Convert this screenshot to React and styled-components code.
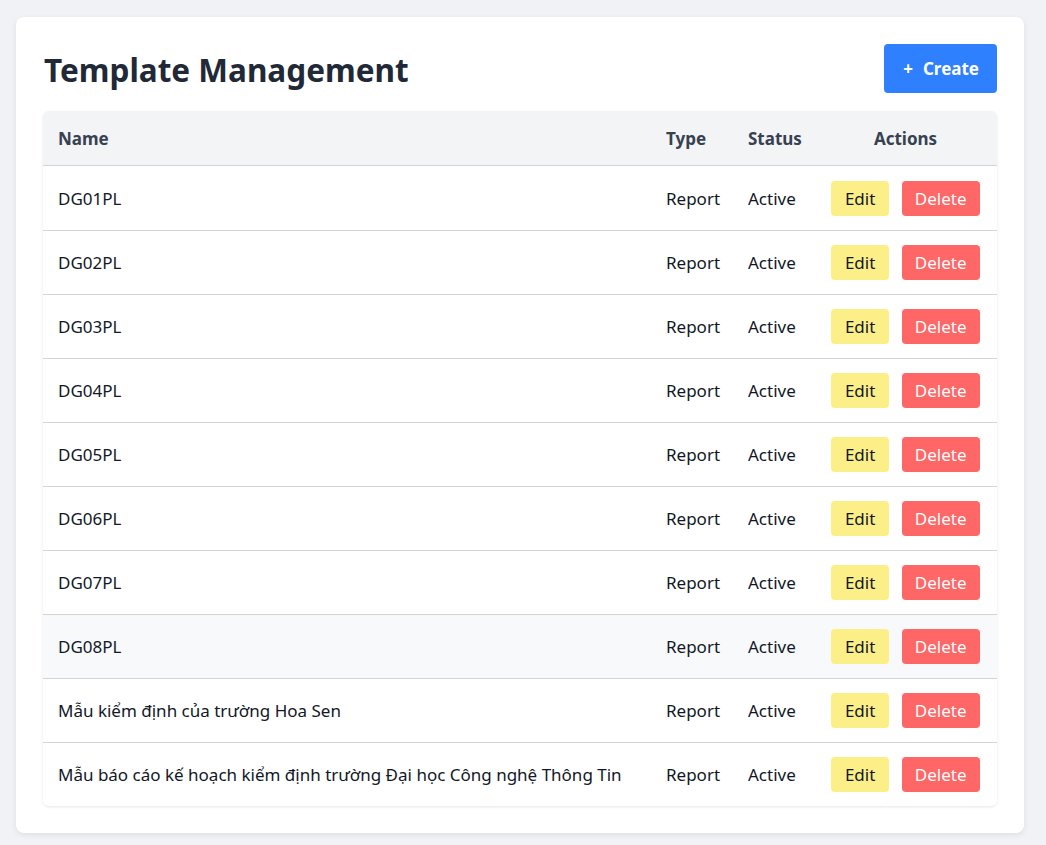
import React from 'react';
import styled, { createGlobalStyle } from 'styled-components';

const GlobalStyle = createGlobalStyle`
    body {
        margin: 0;
        background: #f0f2f5;
        font-family: "Noto Sans", "Open Sans", sans-serif;
        color: #111827;
    }
`;

const Page = styled.div`
    padding: 17px 22px 12px 16px;
`;

const Card = styled.div`
    background: #ffffff;
    border-radius: 8px;
    box-shadow: 0 2px 6px rgba(0, 0, 0, 0.08);
    padding: 27px 27px 27px 27px;
`;

const Header = styled.div`
    display: flex;
    align-items: flex-start;
    justify-content: space-between;
    margin-bottom: 18px;
`;

const Title = styled.h1`
    margin: 10px 0 0 1px;
    font-size: 31.5px;
    line-height: 1;
    font-weight: 700;
    color: #1f2937;
`;

const CreateButton = styled.button`
    display: flex;
    align-items: center;
    gap: 10px;
    height: 49px;
    padding: 0 18px 0 19px;
    background: #2f80ff;
    color: #ffffff;
    border: none;
    border-radius: 4px;
    font-family: inherit;
    font-size: 17px;
    font-weight: 700;
    cursor: pointer;
`;

const TableWrap = styled.div`
    border-radius: 6px;
    overflow: hidden;
    box-shadow: 0 1px 3px rgba(0, 0, 0, 0.1);
`;

const Table = styled.table`
    width: 100%;
    table-layout: fixed;
    border-collapse: collapse;
    font-size: 17px;

    tbody tr:first-child td {
        height: 64px;
    }

    tbody tr:not(:first-child) td {
        border-top: 1px solid #d1d5db;
    }
`;

const Col = styled.col`
    width: ${p => p.$w ? `${p.$w}px` : 'auto'};
`;

const Th = styled.th`
    background: #f3f4f6;
    height: 53px;
    padding: ${p => p.$actions ? '1px 16px 0 14px' : '1px 12px 0 15px'};
    text-align: ${p => p.$actions ? 'center' : 'left'};
    font-weight: 700;
    color: #374151;
    border-bottom: 1px solid #d1d5db;
    white-space: nowrap;
`;

const Tr = styled.tr`
    background: ${p => p.$hover ? '#f8f9fb' : '#ffffff'};
`;

const Td = styled.td`
    height: 63px;
    padding: ${p => p.$actions ? '0 16px 0 14px' : '0 12px 0 15px'};
    white-space: nowrap;
    color: #111827;
`;

const Actions = styled.div`
    display: flex;
    gap: 13px;
    justify-content: center;
`;

const ActionButton = styled.button`
    height: 35px;
    padding: 0 ${p => p.$danger ? 13 : 13.5}px;
    border: none;
    border-radius: 4px;
    font-family: inherit;
    font-size: 17px;
    background: ${p => p.$danger ? '#ff6666' : '#fdef87'};
    color: ${p => p.$danger ? '#ffffff' : '#111827'};
    cursor: pointer;
`;

const templates = [
    'DG01PL', 'DG02PL', 'DG03PL', 'DG04PL', 'DG05PL', 'DG06PL', 'DG07PL', 'DG08PL',
    'Mẫu kiểm định của trường Hoa Sen',
    'Mẫu báo cáo kế hoạch kiểm định trường Đại học Công nghệ Thông Tin',
];

function App() {
    return (
        <Page>
            <GlobalStyle />
            <Card>
                <Header>
                    <Title>Template Management</Title>
                    <CreateButton>
                        <span>+</span>
                        <span>Create</span>
                    </CreateButton>
                </Header>
                <TableWrap>
                    <Table>
                        <colgroup>
                            <Col />
                            <Col $w={82} />
                            <Col $w={83} />
                            <Col $w={181} />
                        </colgroup>
                        <thead>
                            <tr>
                                <Th>Name</Th>
                                <Th>Type</Th>
                                <Th>Status</Th>
                                <Th $actions>Actions</Th>
                            </tr>
                        </thead>
                        <tbody>
                            {templates.map((name, i) => (
                                <Tr key={name} $hover={i === 7}>
                                    <Td>{name}</Td>
                                    <Td>Report</Td>
                                    <Td>Active</Td>
                                    <Td $actions>
                                        <Actions>
                                            <ActionButton>Edit</ActionButton>
                                            <ActionButton $danger>Delete</ActionButton>
                                        </Actions>
                                    </Td>
                                </Tr>
                            ))}
                        </tbody>
                    </Table>
                </TableWrap>
            </Card>
        </Page>
    );
}

export default App;
